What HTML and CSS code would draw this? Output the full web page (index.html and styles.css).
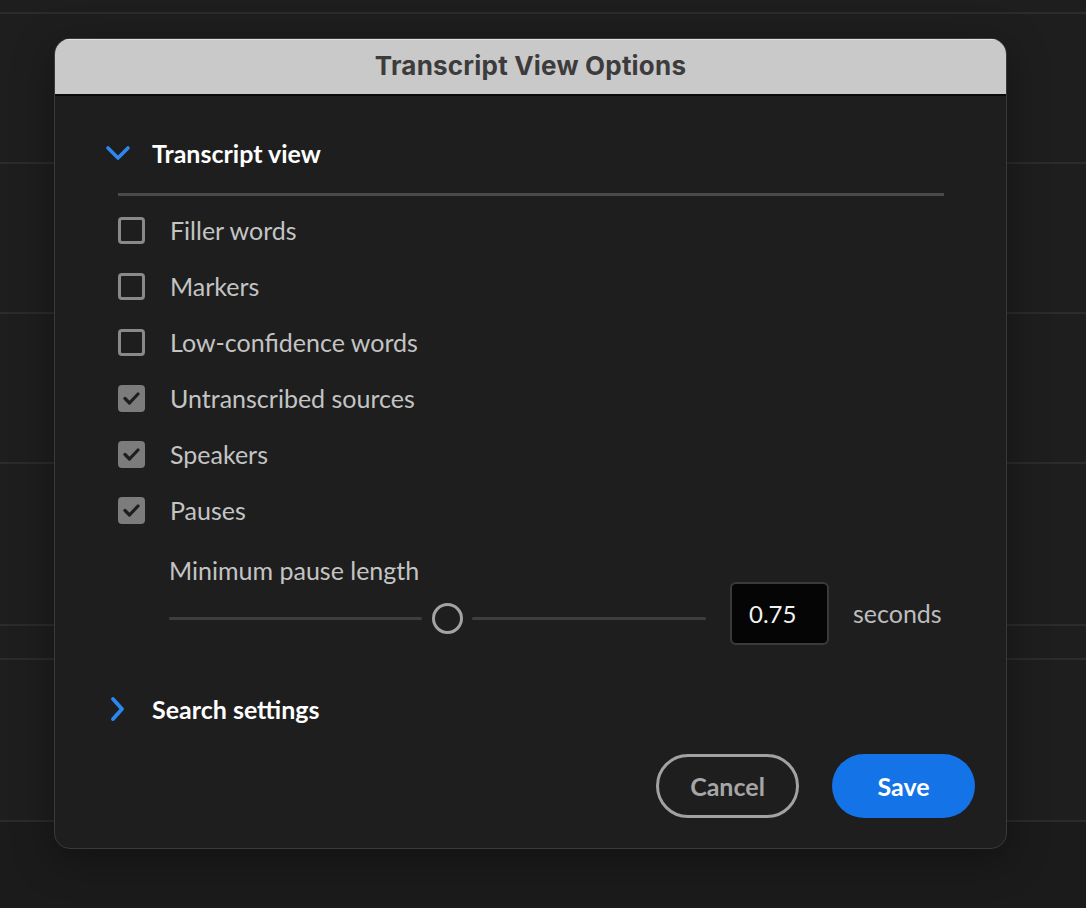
FILE: index.html
```html
<!DOCTYPE html>
<html>
<head>
<meta charset="utf-8">
<link rel="stylesheet" href="styles.css">
</head>
<body>
<div class="backdrop">
  <div class="bg-row h12"></div>
  <div class="bg-row h150"></div>
  <div class="bg-row h150"></div>
  <div class="bg-row h150"></div>
  <div class="bg-row h162"></div>
  <div class="bg-row h34"></div>
  <div class="bg-row h162"></div>
  <div class="bg-row last"></div>
</div>

<div class="dialog">
  <div class="titlebar">Transcript View Options</div>
  <div class="content">
    <div class="section-head">
      <svg class="chev" width="26" height="18" viewBox="0 0 26 18"><path d="M3 4 L13 14 L23 4" fill="none" stroke="#2d87f0" stroke-width="3.6" stroke-linecap="round" stroke-linejoin="round"/></svg>
      <span class="section-title">Transcript view</span>
    </div>
    <div class="separator"></div>
    <div class="options">
      <label class="opt"><span class="box"></span><span class="lbl">Filler words</span></label>
      <label class="opt"><span class="box"></span><span class="lbl">Markers</span></label>
      <label class="opt"><span class="box"></span><span class="lbl">Low-confidence words</span></label>
      <label class="opt"><span class="box checked"><svg width="27" height="27" viewBox="0 0 27 27"><path d="M7 13.5 L11.5 18 L20 9" fill="none" stroke="#1e1e1e" stroke-width="3.2" stroke-linecap="round" stroke-linejoin="round"/></svg></span><span class="lbl">Untranscribed sources</span></label>
      <label class="opt"><span class="box checked"><svg width="27" height="27" viewBox="0 0 27 27"><path d="M7 13.5 L11.5 18 L20 9" fill="none" stroke="#1e1e1e" stroke-width="3.2" stroke-linecap="round" stroke-linejoin="round"/></svg></span><span class="lbl">Speakers</span></label>
      <label class="opt"><span class="box checked"><svg width="27" height="27" viewBox="0 0 27 27"><path d="M7 13.5 L11.5 18 L20 9" fill="none" stroke="#1e1e1e" stroke-width="3.2" stroke-linecap="round" stroke-linejoin="round"/></svg></span><span class="lbl">Pauses</span></label>
    </div>
    <div class="pause">
      <div class="pause-label">Minimum pause length</div>
      <div class="slider-row">
        <div class="track left"></div>
        <div class="thumb"></div>
        <div class="track right"></div>
        <div class="num">0.75</div>
        <div class="unit">seconds</div>
      </div>
    </div>
    <div class="section-head search">
      <svg class="chev" width="26" height="26" viewBox="0 0 26 26"><path d="M8 3 L17 13 L8 23" fill="none" stroke="#2d87f0" stroke-width="3.8" stroke-linecap="round" stroke-linejoin="round"/></svg>
      <span class="section-title">Search settings</span>
    </div>
    <div class="buttons">
      <button class="btn cancel">Cancel</button>
      <button class="btn save">Save</button>
    </div>
  </div>
</div>
</body>
</html>
```

FILE: styles.css
```css
html, body {
  margin: 0;
  padding: 0;
}
body {
  width: 1086px;
  height: 908px;
  background: #1c1c1c;
  overflow: hidden;
  position: relative;
  font-family: "Lato", "Noto Sans", sans-serif;
}
.backdrop {
  display: flex;
  flex-direction: column;
  height: 908px;
}
.bg-row {
  border-bottom: 2px solid #2b2b2b;
  box-sizing: border-box;
  background: #1e1e1e;
}
.h12 { height: 14px; }
.h150 { height: 150px; }
.h162 { height: 162px; }
.h34 { height: 34px; }
.bg-row.last { flex: 1; border-bottom: none; background: #1b1b1b; }

.dialog {
  position: absolute;
  left: 54px;
  top: 38px;
  width: 953px;
  height: 811px;
  box-sizing: border-box;
  border: 1px solid #3a3a3a;
  border-radius: 16px;
  background: #1e1e1e;
  box-shadow: 0 10px 40px rgba(0,0,0,0.35);
  overflow: hidden;
}
.titlebar {
  background: #c9c9c9;
  border-top: 1px solid #e2e2e2;
  border-bottom: 2px solid #0a0a0a;
  box-sizing: border-box;
  height: 57px;
  display: flex;
  align-items: center;
  justify-content: center;
  font-family: "Inter", "Liberation Sans", sans-serif;
  font-weight: 700;
  font-size: 26px;
  color: #3c3c3c;
  letter-spacing: 0.2px;
  padding-bottom: 4px;
}
.content {
  display: flex;
  flex-direction: column;
  padding: 0 62px 0 50px;
}
.section-head {
  display: flex;
  align-items: center;
  height: 40px;
  margin-top: 37px;
}
.chev {
  display: block;
  flex: none;
}
.section-head .chev { margin-right: 21px; }
.section-title {
  font-family: "Lato", "Noto Sans", sans-serif;
  font-weight: 700;
  font-size: 25px;
  color: #ffffff;
  letter-spacing: 0px;
}
.separator {
  height: 3px;
  background: #4a4a4a;
  margin: 20px 0 0 13px;
}
.options {
  display: flex;
  flex-direction: column;
  margin-top: 6px;
  margin-left: 13px;
}
.opt {
  display: flex;
  align-items: center;
  height: 56px;
}
.box {
  width: 27px;
  height: 27px;
  box-sizing: border-box;
  border: 3px solid #898989;
  border-radius: 4px;
  margin-right: 25px;
  flex: none;
  position: relative;
}
.box.checked {
  background: #7c7c7c;
  border-color: #7c7c7c;
}
.box.checked svg {
  position: absolute;
  left: -3px;
  top: -3px;
}
.lbl {
  font-size: 25px;
  color: #c4c4c4;
  font-weight: 400;
}
.pause {
  margin-left: 64px;
  display: flex;
  flex-direction: column;
}
.pause-label {
  font-size: 25px;
  color: #c4c4c4;
  height: 36px;
  line-height: 36px;
  margin-top: 14px;
}
.slider-row {
  display: flex;
  align-items: center;
  height: 64px;
  margin-top: -2px;
}
.track {
  height: 3px;
  background: #3e3e3e;
  border-radius: 2px;
}
.track.left { width: 253px; }
.track.right { width: 234px; }
.thumb {
  width: 31px;
  height: 31px;
  box-sizing: border-box;
  border: 3px solid #a3a3a3;
  border-radius: 50%;
  margin: 0 9px 0 10px;
  background: #1e1e1e;
  flex: none;
}
.num {
  margin-left: 24px;
  margin-bottom: 9px;
  width: 99px;
  height: 63px;
  box-sizing: border-box;
  background: #050505;
  border: 2px solid #3a3a3a;
  border-radius: 6px;
  color: #f2f2f2;
  font-size: 24px;
  display: flex;
  align-items: center;
  padding-left: 17px;
  flex: none;
}
.unit {
  margin-left: 24px;
  margin-bottom: 10px;
  font-size: 25px;
  color: #bdbdbd;
}
.section-head.search {
  margin-top: 39px;
}
.buttons {
  display: flex;
  justify-content: flex-end;
  gap: 33px;
  margin-top: 25px;
  margin-right: -31px;
}
.btn {
  width: 143px;
  height: 64px;
  border-radius: 32px;
  box-sizing: border-box;
  font-family: "Lato", "Noto Sans", sans-serif;
  font-weight: 700;
  font-size: 25px;
  padding: 0;
}
.btn.cancel {
  background: transparent;
  border: 3px solid #a2a2a2;
  color: #a6a6a6;
}
.btn.save {
  background: #1473e6;
  border: none;
  color: #ffffff;
}
```
